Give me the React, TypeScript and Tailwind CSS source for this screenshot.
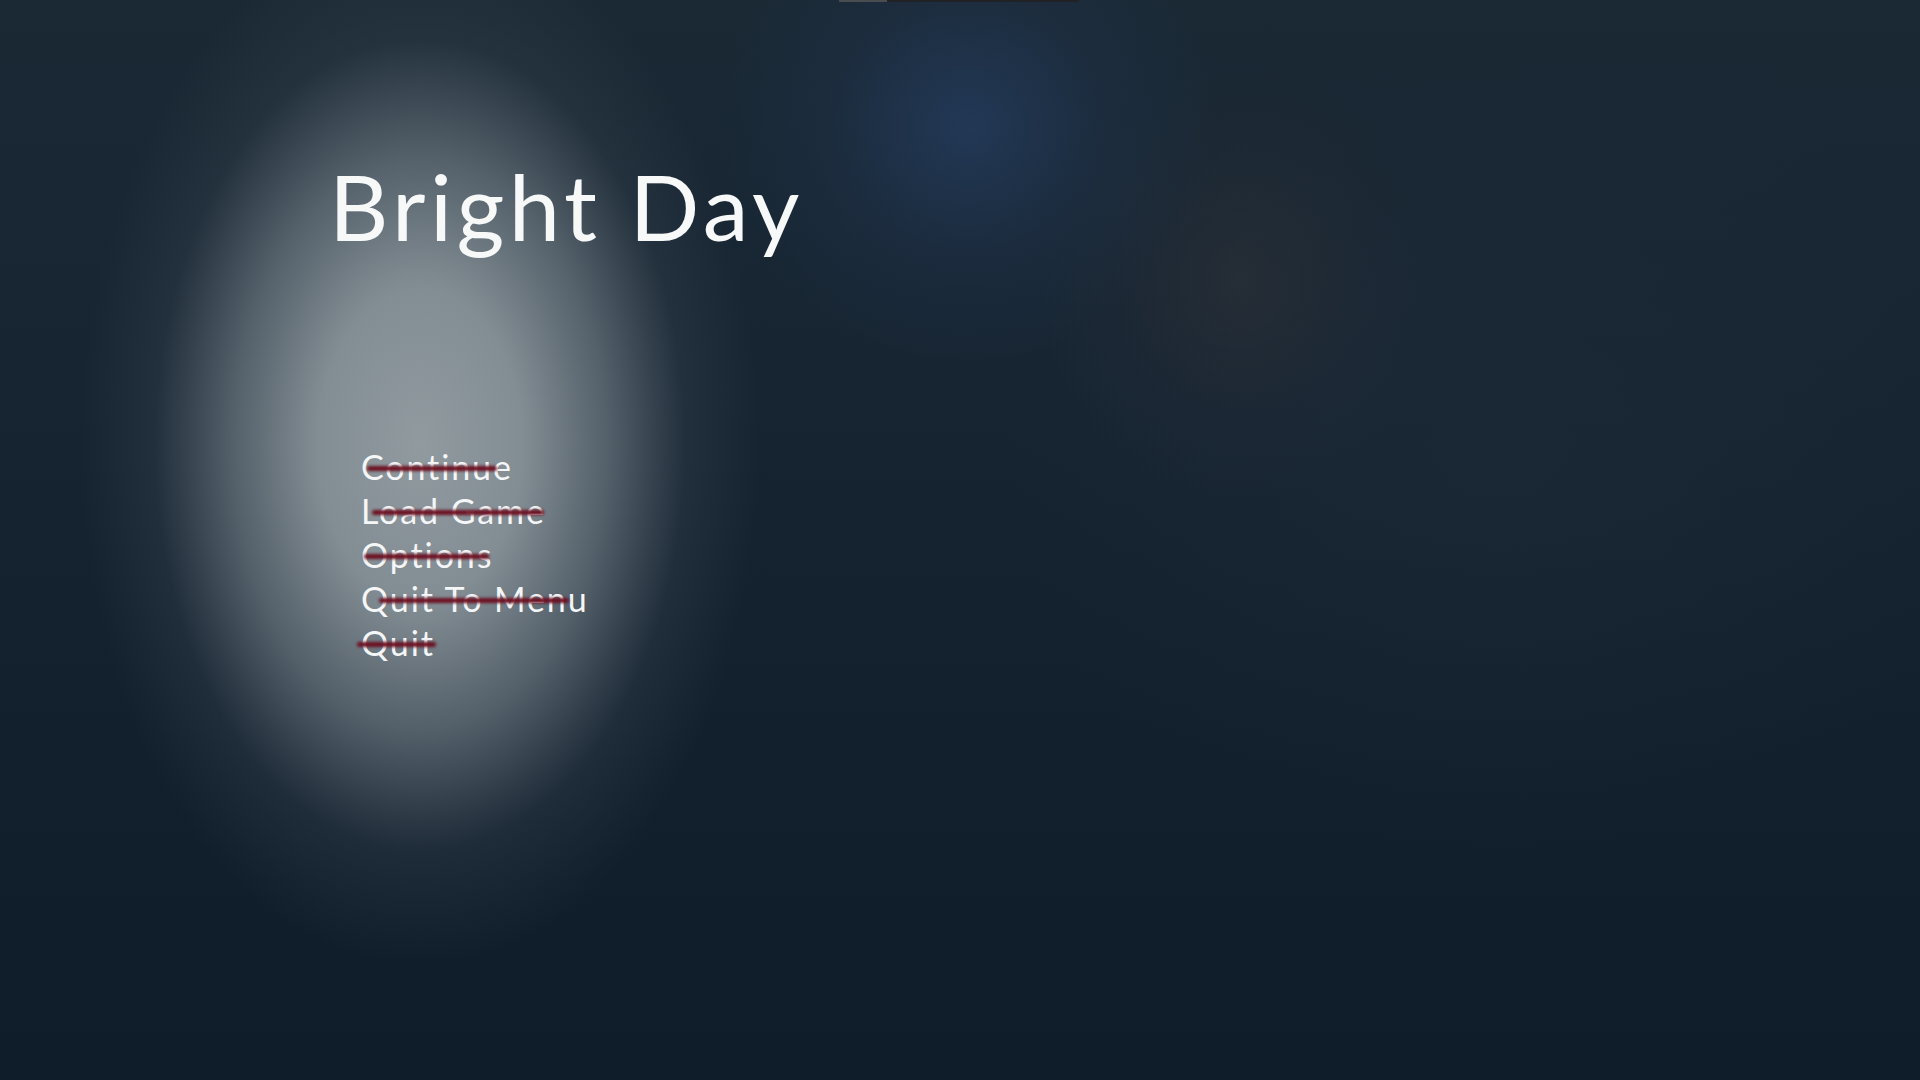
import React from "react";

const menu = [
  { label: "Continue", line: "left-[6px] w-[130px]" },
  { label: "Load Game", line: "left-[11px] w-[172px]" },
  { label: "Options", line: "left-[3px] w-[125px]" },
  { label: "Quit To Menu", line: "left-[18px] w-[190px]" },
  { label: "Quit", line: "left-[-4px] w-[79px]" },
];

export default function App() {
  return (
    <div
      className="relative h-[1080px] w-[1920px] overflow-hidden bg-[#142230] bg-[radial-gradient(ellipse_340px_520px_at_420px_445px,rgba(148,158,163,0.97)_0%,rgba(140,150,156,0.92)_30%,rgba(110,122,130,0.7)_55%,rgba(55,68,80,0.35)_78%,rgba(20,34,48,0)_100%),radial-gradient(ellipse_250px_240px_at_968px_125px,rgba(36,60,94,0.8)_0%,rgba(32,50,76,0.4)_55%,rgba(20,34,48,0)_100%),radial-gradient(ellipse_200px_220px_at_1240px_280px,rgba(52,52,56,0.45)_0%,rgba(44,46,52,0.2)_55%,rgba(20,34,48,0)_100%),radial-gradient(ellipse_500px_400px_at_1500px_450px,rgba(30,44,58,0.5)_0%,rgba(20,34,48,0)_100%),linear-gradient(180deg,#1a2934_0%,#172533_35%,#121f2d_70%,#0f1c29_100%)]"
      style={{ fontFamily: "Lato, 'Noto Sans', sans-serif" }}
    >
      <div className="absolute left-[839px] top-0 flex h-[2px] w-[240px]">
        <div className="h-full w-[48px] bg-[#4a4d50]" />
        <div className="h-full flex-1 bg-[#202226]" />
      </div>

      <div className="flex flex-col pl-[329px] pt-[160px]">
        <h1 className="text-[92px] font-normal leading-none tracking-[4.5px] text-[#f7f8f8]">
          Bright Day
        </h1>

        <ul className="mt-[193px] flex flex-col pl-[32px]">
          {menu.map((item) => (
            <li key={item.label} className="h-[44px]">
              <span className="relative inline-block text-[34px] leading-[44px] tracking-[1.9px] text-[#f5f6f7]">
                {item.label}
                <span
                  className={`absolute top-[21px] h-[5px] rounded-full bg-[#6c0f20] blur-[1.6px] ${item.line}`}
                />
              </span>
            </li>
          ))}
        </ul>
      </div>
    </div>
  );
}
